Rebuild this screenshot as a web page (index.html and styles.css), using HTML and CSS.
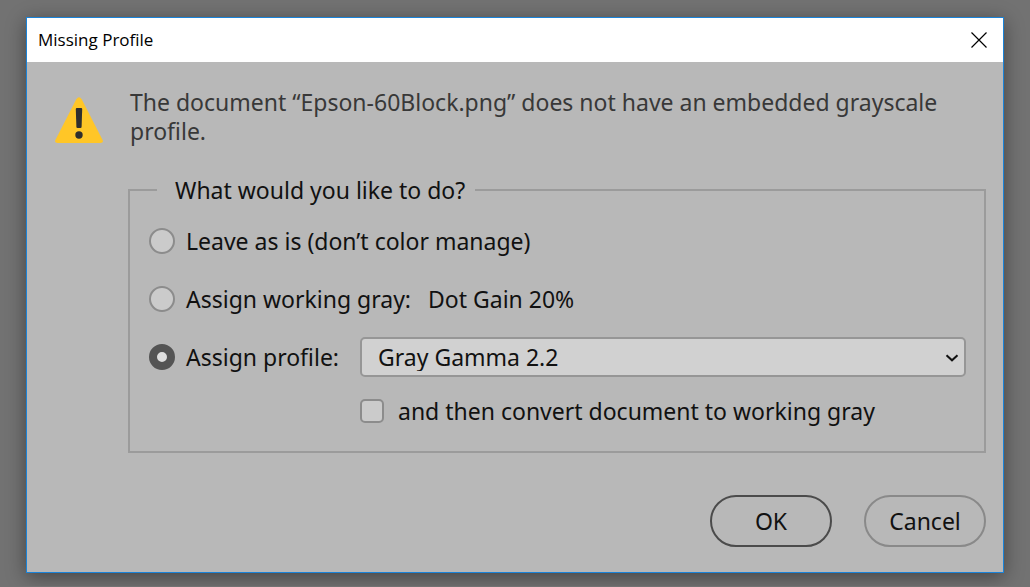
FILE: index.html
```html
<!DOCTYPE html>
<html lang="en">
<head>
<meta charset="utf-8">
<title>Missing Profile</title>
<link rel="stylesheet" href="styles.css">
</head>
<body>
<form class="dialog" role="dialog" aria-labelledby="dialog-title">
  <header class="titlebar">
    <h1 class="title" id="dialog-title">Missing Profile</h1>
    <button class="close" type="button" aria-label="Close">
      <svg width="16" height="16" viewBox="0 0 16 16" aria-hidden="true"><path d="M.5.5l15 15M15.5.5l-15 15" fill="none" stroke="#000" stroke-width="1.2"/></svg>
    </button>
  </header>
  <div class="content">
    <svg class="warning" width="48" height="46" viewBox="0 0 48 46" aria-hidden="true">
      <path d="M21.3 2.200Q24-1.800 26.700 2.200L47.6 43Q48.6 46 45.5 46H2.5Q-.6 46 .4 43Z" fill="#ffc627"/>
      <path d="M20.800 12Q20.800 11 21.800 11H26.200Q27.200 11 27.200 12L26.600 30Q26.500 31 25.500 31H22.500Q21.500 31 21.400 30Z" fill="#2e2e2e"/>
      <circle cx="24" cy="38" r="3.700" fill="#2e2e2e"/>
    </svg>
    <div class="main">
      <p class="message">The document “Epson-60Block.png” does not have an embedded grayscale profile.</p>
      <fieldset class="options">
        <legend class="legend">What would you like to do?</legend>
        <div class="choices">
          <div class="choice">
            <input class="radio" type="radio" name="action" id="leave">
            <label for="leave">Leave as is (don’t color manage)</label>
          </div>
          <div class="choice">
            <input class="radio" type="radio" name="action" id="working">
            <label class="working" for="working"><span>Assign working gray:</span><span>Dot Gain 20%</span></label>
          </div>
          <div class="profile">
            <div class="choice">
              <input class="radio" type="radio" name="action" id="assign" checked>
              <label for="assign">Assign profile:</label>
            </div>
            <div class="picker">
              <select class="select" aria-label="Profile"><option>Gray Gamma 2.2</option></select>
              <svg class="chevron" width="14" height="8" viewBox="0 0 14 8" aria-hidden="true"><path d="M1.500 1.200L7 6.300l5.500-5.100" fill="none" stroke="#111" stroke-width="2"/></svg>
            </div>
            <div class="convert">
              <input class="checkbox" type="checkbox" id="convert">
              <label for="convert">and then convert document to working gray</label>
            </div>
          </div>
        </div>
      </fieldset>
    </div>
  </div>
  <footer class="actions">
    <button class="button primary" type="button">OK</button>
    <button class="button" type="button">Cancel</button>
  </footer>
</form>
</body>
</html>
```

FILE: styles.css
```css
* {
  box-sizing: border-box;
}

body {
  margin: 0;
  padding: 17px 26px 13px;
  background: #727272;
  color: #111;
  font: 23px/28px "Noto Sans", "Open Sans", sans-serif;
}

.dialog {
  border: 1px solid #1a83d8;
  background: #b8b8b8;
  box-shadow: 0 4px 18px rgba(0, 0, 0, 0.4);
}

.titlebar {
  display: flex;
  align-items: center;
  justify-content: space-between;
  height: 44px;
  padding: 0 16px 0 11px;
  background: #fff;
}

.title {
  margin: 0;
  color: #000;
  font: 17px/24px "Open Sans", "Noto Sans", sans-serif;
}

.close {
  display: flex;
  padding: 0;
  border: 0;
  background: none;
}

.content {
  display: flex;
  gap: 25px;
  padding: 26px 17px 0 28px;
}

.warning {
  flex: none;
  margin-top: 9px;
}

.main {
  flex: 1;
  min-width: 0;
}

.message {
  margin: 0 0 28px 2px;
  color: #383838;
  line-height: 29px;
}

.options {
  margin: 0;
  min-width: 0;
  padding: 0 18px 26px 19px;
  border: 2px solid #9b9b9b;
}

.legend {
  margin-left: 8px;
  padding: 2px 10px 2px 18px;
}

.choices {
  display: flex;
  flex-direction: column;
  gap: 18px;
  padding-top: 15px;
}

.choice,
.convert,
.working {
  display: flex;
  align-items: center;
}

.choice {
  min-height: 40px;
  gap: 11px;
}

.working {
  gap: 17px;
}

.convert {
  grid-column: 2;
  gap: 14px;
}

.profile {
  display: grid;
  grid-template-columns: 211px 1fr;
  row-gap: 20px;
}

.radio,
.checkbox {
  appearance: none;
  flex: none;
  margin: 0;
  border: 2px solid #8c8c8c;
  background: #cbcbcb;
}

.radio {
  width: 26px;
  height: 26px;
  border-radius: 50%;
}

.radio:checked {
  border: 8px solid #545454;
  background: #dedede;
}

.checkbox {
  width: 24px;
  height: 24px;
  border-radius: 5px;
}

.picker {
  position: relative;
}

.select {
  appearance: none;
  width: 100%;
  height: 40px;
  padding: 0 40px 0 16px;
  border: 2px solid #969696;
  border-radius: 5px;
  background: #d1d1d1;
  color: inherit;
  font: inherit;
}

.chevron {
  position: absolute;
  top: 17px;
  right: 7px;
  pointer-events: none;
}

.actions {
  display: flex;
  justify-content: flex-end;
  gap: 32px;
  padding: 42px 17px 25px;
}

.button {
  width: 122px;
  height: 52px;
  padding: 0;
  border: 2px solid #898989;
  border-radius: 26px;
  background: none;
  color: inherit;
  font: inherit;
}

.primary {
  border-color: #4b4b4b;
}
```
